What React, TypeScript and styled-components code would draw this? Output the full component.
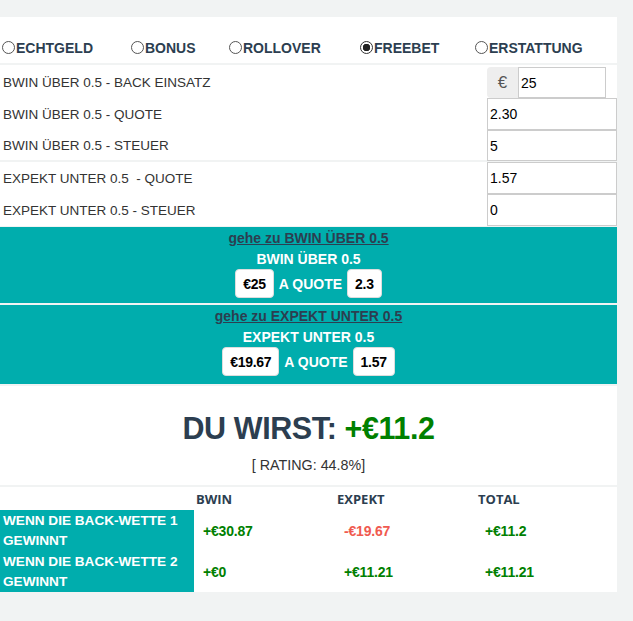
import styled, { createGlobalStyle } from "styled-components";

const GlobalStyle = createGlobalStyle`
  html, body {
    margin: 0;
    padding: 0;
    background: #f1f3f3;
  }
  body {
    font-family: "Liberation Sans", Arial, sans-serif;
    color: #333;
  }
`;

const Page = styled.div`
  width: 617px;
  padding-top: 17px;
  display: flex;
  flex-direction: column;
  gap: 2px;
`;

const Section = styled.section`
  background: #fff;
`;

const RadioRow = styled(Section)`
  display: grid;
  grid-template-columns: 129px 98px 131px 115px 1fr;
  align-items: center;
  height: 46px;
  padding-top: 15px;
  box-sizing: border-box;
`;

const RadioLabel = styled.label`
  display: flex;
  align-items: center;
  padding-left: 2px;
  font-size: 14px;
  font-weight: bold;
  color: #2c3e50;
`;

const Radio = styled.input`
  appearance: none;
  margin: 0 1px 0 0;
  width: 13px;
  height: 13px;
  border: 1px solid #555;
  border-radius: 50%;
  box-sizing: border-box;
  background: #fff;
  &:checked {
    border-color: #333;
    background: radial-gradient(circle, #222 0 3.5px, #fff 4px);
  }
`;

const Fields = styled(Section)<{ $top?: number }>`
  padding-top: ${(p) => p.$top ?? 0}px;
  display: flex;
  flex-direction: column;
`;

const FieldRow = styled.div<{ $h: number }>`
  display: flex;
  align-items: center;
  justify-content: space-between;
  height: ${(p) => p.$h}px;
`;

const FieldLabel = styled.span`
  padding-left: 3px;
  font-size: 13.5px;
  color: #333;
`;

const InputGroup = styled.div`
  display: flex;
  width: 130px;
  height: 31px;
  align-self: flex-start;
`;

const Addon = styled.span`
  width: 31px;
  display: flex;
  align-items: center;
  justify-content: center;
  background: #eee;
  border-radius: 4px 0 0 4px;
  font-size: 17px;
  color: #555;
`;

const Field = styled.input<{ $w?: number; $h?: number }>`
  width: ${(p) => p.$w ?? 130}px;
  height: ${(p) => p.$h ?? 32}px;
  box-sizing: border-box;
  border: 1px solid #ccc;
  padding: 0 2px;
  font-family: "Liberation Sans", Arial, sans-serif;
  font-size: 14px;
  color: #000;
  outline: none;
  align-self: flex-start;
`;

const Instruction = styled.div<{ $h: number }>`
  background: #00adad;
  height: ${(p) => p.$h}px;
  box-sizing: border-box;
  padding-top: 3px;
  display: flex;
  flex-direction: column;
  align-items: center;
  font-size: 14px;
  font-weight: bold;
`;

const GoLink = styled.a`
  color: #2c3e50;
  text-decoration: underline;
  line-height: 16px;
  cursor: pointer;
`;

const BetTitle = styled.div`
  color: #fff;
  line-height: 16px;
  margin-top: 5px;
`;

const BetLine = styled.div`
  display: flex;
  align-items: center;
  gap: 5px;
  color: #fff;
  margin-top: 2px;
`;

const Chip = styled.span`
  display: inline-flex;
  align-items: center;
  height: 29px;
  padding: 0 7px;
  background: #fff;
  border: 1px solid #ddd;
  border-radius: 4px;
  box-sizing: border-box;
  color: #000;
  letter-spacing: -0.3px;
`;

const Result = styled(Section)`
  height: 99px;
  box-sizing: border-box;
  padding-top: 25px;
  text-align: center;
`;

const Headline = styled.h2`
  margin: 0;
  font-size: 30.5px;
  line-height: 34px;
  font-weight: bold;
  color: #2c3e50;
  letter-spacing: -0.4px;
`;

const Gain = styled.span`
  color: #008000;
`;

const Rating = styled.div`
  margin-top: 12px;
  font-size: 14.3px;
  color: #333;
`;

const Table = styled.table`
  background: #fff;
  width: 617px;
  border-collapse: collapse;
  border-spacing: 0;
  table-layout: fixed;
`;

const Head = styled.th`
  text-align: left;
  padding: 0 0 0 2px;
  height: 23px;
  font-family: "Open Sans", sans-serif;
  font-size: 13px;
  font-weight: bold;
  color: #2c3e50;
  vertical-align: middle;
`;

const CaseCell = styled.td`
  background: #00adad;
  color: #fff;
  font-weight: bold;
  font-size: 13.6px;
  line-height: 20px;
  padding: 0 0 0 3px;
  height: 41px;
`;

const Amount = styled.td<{ $loss?: boolean }>`
  padding: 0 0 0 9px;
  font-size: 14px;
  font-weight: bold;
  letter-spacing: -0.2px;
  color: ${(p) => (p.$loss ? "#f05a4f" : "#008000")};
`;

const modes = [
  { label: "ECHTGELD" },
  { label: "BONUS" },
  { label: "ROLLOVER" },
  { label: "FREEBET", checked: true },
  { label: "ERSTATTUNG" },
];

const App = () => {
  return (
    <>
      <GlobalStyle />
      <Page>
        <RadioRow>
          {modes.map((m) => (
            <RadioLabel key={m.label}>
              <Radio type="radio" name="mode" defaultChecked={m.checked} />
              {m.label}
            </RadioLabel>
          ))}
        </RadioRow>

        <Fields $top={2}>
          <FieldRow $h={31}>
            <FieldLabel>BWIN ÜBER 0.5 - BACK EINSATZ</FieldLabel>
            <InputGroup>
              <Addon>€</Addon>
              <Field $w={88} $h={31} defaultValue="25" />
            </InputGroup>
          </FieldRow>
          <FieldRow $h={32}>
            <FieldLabel>BWIN ÜBER 0.5 - QUOTE</FieldLabel>
            <Field defaultValue="2.30" />
          </FieldRow>
          <FieldRow $h={30}>
            <FieldLabel>BWIN ÜBER 0.5 - STEUER</FieldLabel>
            <Field $h={31} defaultValue="5" />
          </FieldRow>
        </Fields>

        <Fields>
          <FieldRow $h={32}>
            <FieldLabel>EXPEKT UNTER 0.5&nbsp; - QUOTE</FieldLabel>
            <Field defaultValue="1.57" />
          </FieldRow>
          <FieldRow $h={32}>
            <FieldLabel>EXPEKT UNTER 0.5 - STEUER</FieldLabel>
            <Field defaultValue="0" />
          </FieldRow>
        </Fields>

        <Instruction $h={76} style={{ marginTop: -1 }}>
          <GoLink>gehe zu BWIN ÜBER 0.5</GoLink>
          <BetTitle>BWIN ÜBER 0.5</BetTitle>
          <BetLine>
            <Chip>€25</Chip>A QUOTE<Chip>2.3</Chip>
          </BetLine>
        </Instruction>

        <Instruction $h={79}>
          <GoLink>gehe zu EXPEKT UNTER 0.5</GoLink>
          <BetTitle>EXPEKT UNTER 0.5</BetTitle>
          <BetLine>
            <Chip>€19.67</Chip>A QUOTE<Chip>1.57</Chip>
          </BetLine>
        </Instruction>

        <Result>
          <Headline>
            DU WIRST: <Gain>+€11.2</Gain>
          </Headline>
          <Rating>[ RATING: 44.8%]</Rating>
        </Result>

        <Table>
          <colgroup>
            <col style={{ width: 194 }} />
            <col style={{ width: 141 }} />
            <col style={{ width: 141 }} />
            <col />
          </colgroup>
          <thead>
            <tr>
              <Head />
              <Head>BWIN</Head>
              <Head>EXPEKT</Head>
              <Head>TOTAL</Head>
            </tr>
          </thead>
          <tbody>
            <tr>
              <CaseCell>WENN DIE BACK-WETTE 1 GEWINNT</CaseCell>
              <Amount>+€30.87</Amount>
              <Amount $loss>-€19.67</Amount>
              <Amount>+€11.2</Amount>
            </tr>
            <tr>
              <CaseCell>WENN DIE BACK-WETTE 2 GEWINNT</CaseCell>
              <Amount>+€0</Amount>
              <Amount>+€11.21</Amount>
              <Amount>+€11.21</Amount>
            </tr>
          </tbody>
        </Table>
      </Page>
    </>
  );
};

export default App;
